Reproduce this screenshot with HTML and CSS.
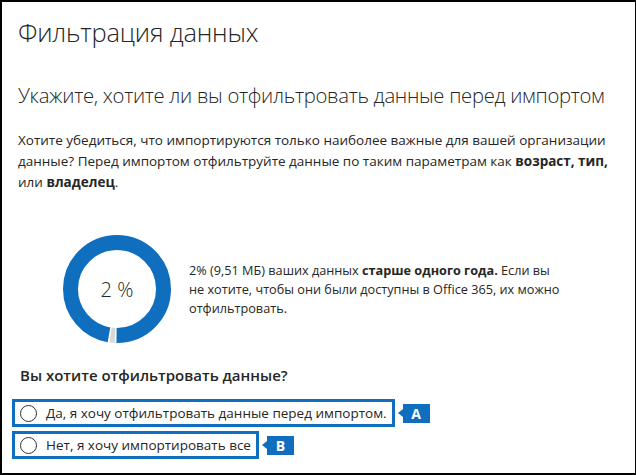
FILE: index.html
```html
<!DOCTYPE html>
<html lang="ru">
<head>
<meta charset="utf-8">
<link rel="stylesheet" href="styles.css">
</head>
<body>
<div class="frame">
  <h1 class="title">Фильтрация данных</h1>
  <h2 class="subtitle">Укажите, хотите ли вы отфильтровать данные перед импортом</h2>
  <p class="intro">Хотите убедиться, что импортируются только наиболее важные для вашей организации данные? Перед импортом отфильтруйте данные по таким параметрам как <b>возраст, тип,</b> или <b>владелец</b>.</p>
  <div class="stat">
    <div class="donut">
      <svg width="108" height="108" viewBox="0 0 108 108">
        <circle cx="54" cy="54" r="46.5" fill="none" stroke="#106ebe" stroke-width="15" stroke-dasharray="284.6 7.6" stroke-dashoffset="-81" />
        <circle cx="54" cy="54" r="46.5" fill="none" stroke="#d9d9d9" stroke-width="15" stroke-dasharray="4.6 287.6" stroke-dashoffset="-74.9" />
      </svg>
      <span class="donut-label">2 %</span>
    </div>
    <p class="stat-text">2% (9,51 МБ) ваших данных <b>старше одного года.</b> Если вы не хотите, чтобы они были доступны в Office 365, их можно отфильтровать.</p>
  </div>
  <div class="question">Вы хотите отфильтровать данные?</div>
  <div class="options">
    <div class="option-row">
      <label class="option"><span class="radio"></span>Да, я хочу отфильтровать данные перед импортом.</label>
      <span class="badge">A</span>
    </div>
    <div class="option-row">
      <label class="option"><span class="radio"></span>Нет, я хочу импортировать все</label>
      <span class="badge">B</span>
    </div>
  </div>
</div>
</body>
</html>
```

FILE: styles.css
```css
* { box-sizing: border-box; }
html, body { margin: 0; padding: 0; background: #fff; }
body {
  font-family: "Open Sans", "Noto Sans", sans-serif;
  color: #262626;
}
.frame {
  width: 636px;
  height: 475px;
  border: 2px solid #000;
  border-right-width: 1px;
  padding: 0 0 0 16px;
  display: flex;
  flex-direction: column;
  overflow: hidden;
}
.title {
  margin: 13px 0 0 0;
  font-size: 25.5px;
  font-weight: 300;
  line-height: 34px;
  letter-spacing: -0.2px;
}
.subtitle {
  margin: 32px 0 0 0;
  font-size: 20.3px;
  font-weight: 300;
  line-height: 28px;
  letter-spacing: -0.3px;
}
.intro {
  margin: 21px 0 0 0;
  font-size: 13.5px;
  line-height: 21px;
  width: 600px;
}
.intro b, .stat-text b { font-weight: 700; }
.stat {
  display: flex;
  align-items: center;
  margin: 42px 0 0 45px;
  gap: 18px;
}
.donut {
  position: relative;
  width: 108px;
  height: 108px;
}
.donut svg { display: block; }
.donut-label {
  position: absolute;
  inset: 0;
  display: flex;
  align-items: center;
  justify-content: center;
  font-size: 20px;
  font-weight: 300;
}
.stat-text {
  margin: 0;
  width: 378px;
  font-size: 12.7px;
  line-height: 19px;
}
.question {
  margin: 22px 0 0 2px;
  font-size: 15px;
  font-weight: 600;
  line-height: 20px;
}
.options {
  margin: 14px 0 0 -6px;
  display: flex;
  flex-direction: column;
  gap: 4px;
}
.option-row {
  display: flex;
  align-items: center;
  gap: 5px;
}
.option {
  display: flex;
  align-items: center;
  height: 28px;
  border: 3px solid #106ebe;
  padding: 0 5px 0 5px;
  font-size: 13.5px;
}
.radio {
  width: 17px;
  height: 17px;
  border: 1.6px solid #333;
  border-radius: 50%;
  margin-right: 9px;
}
.badge {
  position: relative;
  background: #106ebe;
  color: #fff;
  font-weight: 700;
  font-size: 14px;
  width: 27px;
  height: 19px;
  display: flex;
  align-items: center;
  justify-content: center;
  margin-left: 3px;
}
.badge::before {
  content: "";
  position: absolute;
  left: -5px;
  top: 5px;
  border-top: 4.5px solid transparent;
  border-bottom: 4.5px solid transparent;
  border-right: 5px solid #106ebe;
}
```
